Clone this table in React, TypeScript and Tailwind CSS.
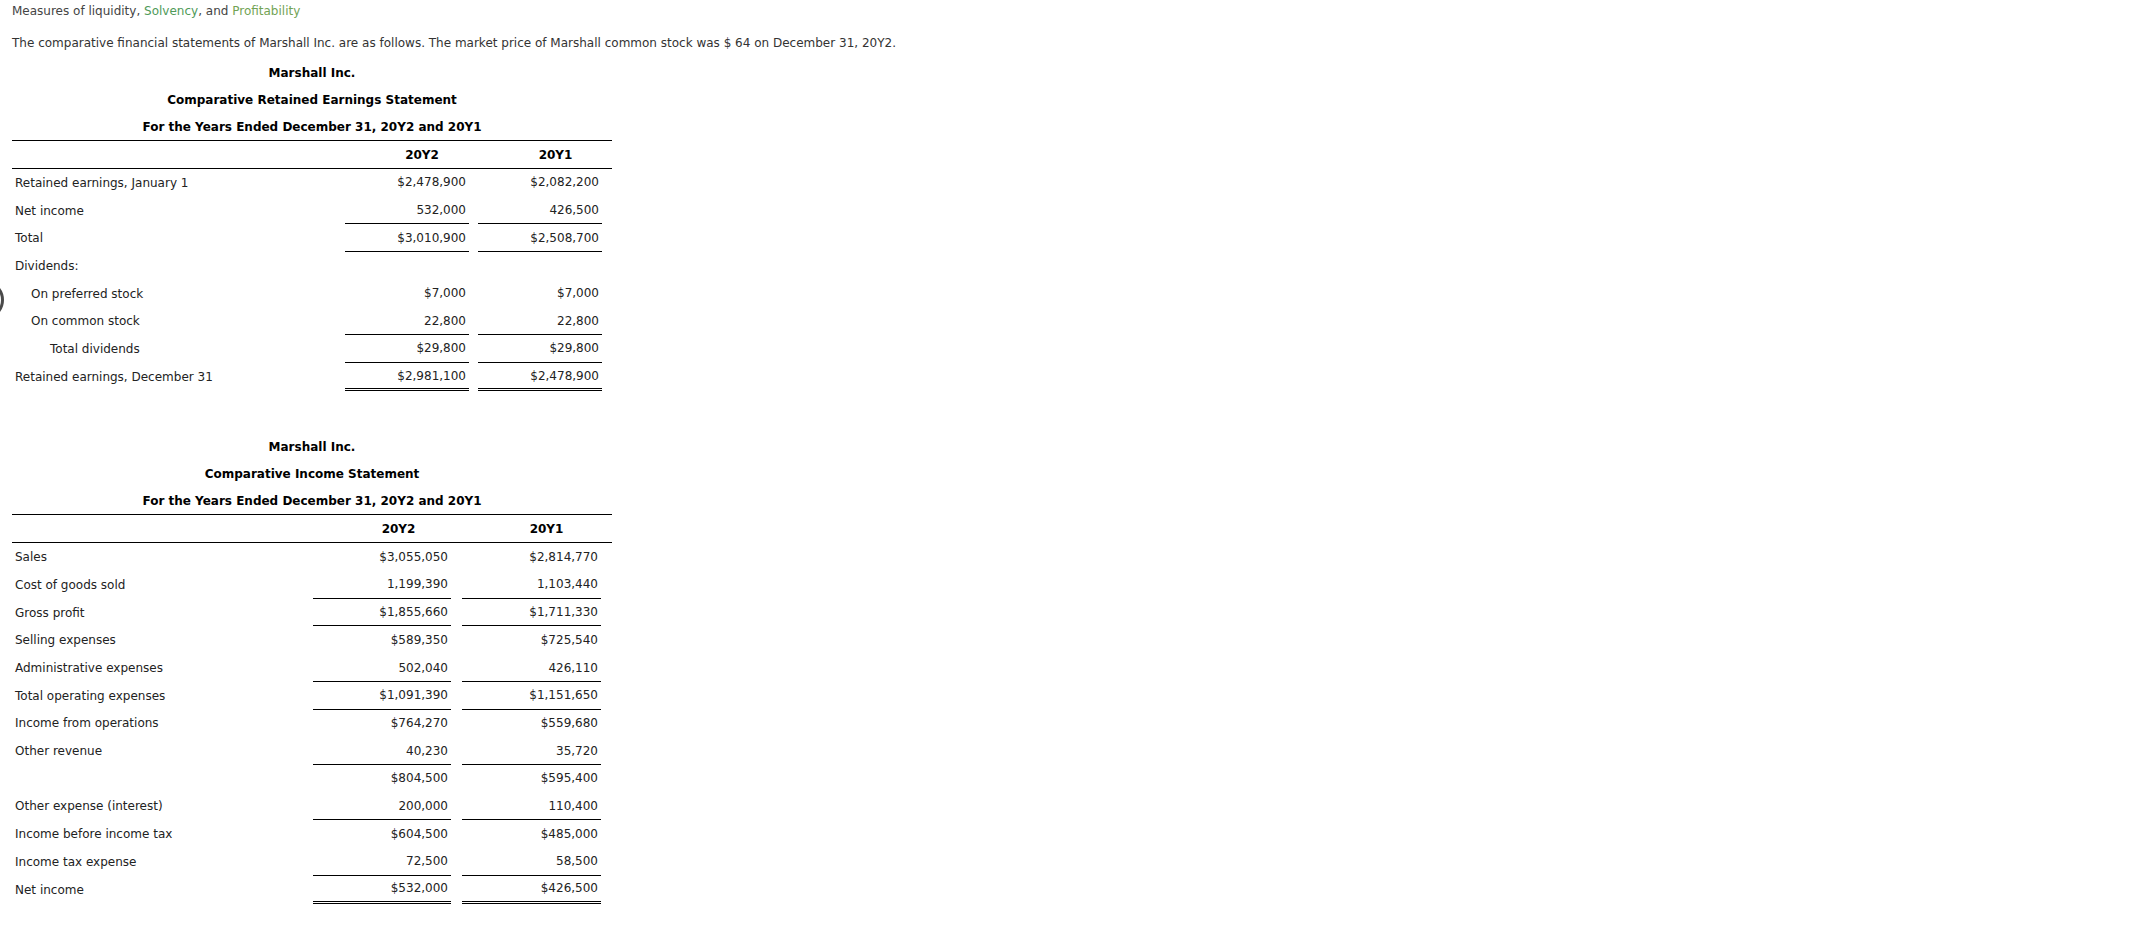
type Row = {
  label: string;
  a: string;
  b: string;
  indent?: 0 | 1 | 2;
  line?: "single" | "double";
};

const retained: Row[] = [
  { label: "Retained earnings, January 1", a: "$2,478,900", b: "$2,082,200" },
  { label: "Net income", a: "532,000", b: "426,500", line: "single" },
  { label: "Total", a: "$3,010,900", b: "$2,508,700", line: "single" },
  { label: "Dividends:", a: "", b: "" },
  { label: "On preferred stock", a: "$7,000", b: "$7,000", indent: 1 },
  { label: "On common stock", a: "22,800", b: "22,800", indent: 1, line: "single" },
  { label: "Total dividends", a: "$29,800", b: "$29,800", indent: 2, line: "single" },
  { label: "Retained earnings, December 31", a: "$2,981,100", b: "$2,478,900", line: "double" },
];

const income: Row[] = [
  { label: "Sales", a: "$3,055,050", b: "$2,814,770" },
  { label: "Cost of goods sold", a: "1,199,390", b: "1,103,440", line: "single" },
  { label: "Gross profit", a: "$1,855,660", b: "$1,711,330", line: "single" },
  { label: "Selling expenses", a: "$589,350", b: "$725,540" },
  { label: "Administrative expenses", a: "502,040", b: "426,110", line: "single" },
  { label: "Total operating expenses", a: "$1,091,390", b: "$1,151,650", line: "single" },
  { label: "Income from operations", a: "$764,270", b: "$559,680" },
  { label: "Other revenue", a: "40,230", b: "35,720", line: "single" },
  { label: "", a: "$804,500", b: "$595,400" },
  { label: "Other expense (interest)", a: "200,000", b: "110,400", line: "single" },
  { label: "Income before income tax", a: "$604,500", b: "$485,000" },
  { label: "Income tax expense", a: "72,500", b: "58,500", line: "single" },
  { label: "Net income", a: "$532,000", b: "$426,500", line: "double" },
];

type Layout = {
  labelW: string;
  colA: string;
  colB: string;
  gap: string;
  headA: string;
  headB: string;
};

const Statement = ({
  title,
  rows,
  layout,
}: {
  title: string;
  rows: Row[];
  layout: Layout;
}) => {
  return (
    <div className="w-[600px]">
      <div className="flex flex-col items-center font-bold text-black">
        <div className="flex h-[27px] items-center">Marshall Inc.</div>
        <div className="flex h-[27px] items-center">{title}</div>
        <div className="flex h-[27px] items-center">For the Years Ended December 31, 20Y2 and 20Y1</div>
      </div>

      <div className="flex h-[29px] items-center border-y border-black font-bold text-black">
        <div className={layout.labelW} />
        <div className={`${layout.colA} ${layout.headA} text-center`}>20Y2</div>
        <div className={layout.gap} />
        <div className={`${layout.colB} ${layout.headB} text-center`}>20Y1</div>
      </div>

      {rows.map((r, i) => {
        const border =
          r.line === "double"
            ? "border-b-[3px] border-double border-black"
            : r.line === "single"
              ? "border-b border-black"
              : "border-b border-transparent";
        const h = r.line === "double" ? "h-[28.6px]" : "h-[27.7px]";
        const pad = r.indent === 2 ? "pl-[38px]" : r.indent === 1 ? "pl-[19px]" : "pl-[3px]";
        return (
          <div key={i} className={`flex ${h} items-stretch`}>
            <div className={`${layout.labelW} ${pad} flex items-center`}>{r.label}</div>
            <div className={`${layout.colA} ${border} flex items-center justify-end pr-[3px]`}>{r.a}</div>
            <div className={layout.gap} />
            <div className={`${layout.colB} ${border} flex items-center justify-end pr-[3px]`}>{r.b}</div>
          </div>
        );
      })}
    </div>
  );
};

export default function App() {
  return (
    <div
      className="relative min-h-screen w-full bg-white text-[12px] leading-4 text-[#222]"
      style={{ fontFamily: '"DejaVu Sans", Verdana, sans-serif' }}
    >
      <svg className="absolute left-0 top-[285px]" width="6" height="30" viewBox="0 0 6 30">
        <circle cx="-16" cy="15" r="18.5" fill="none" stroke="#4a4a4a" strokeWidth="3" />
      </svg>

      <div className="pl-3 pt-[3px]">
        <p className="text-[#444]">
          Measures of liquidity, <span className="text-[#4f9a59]">Solvency</span>, and{" "}
          <span className="text-[#72a354]">Profitability</span>
        </p>
        <p className="mt-4 text-[#333]">
          The comparative financial statements of Marshall Inc. are as follows. The market price of Marshall common
          stock was $ 64 on December 31, 20Y2.
        </p>

        <div className="mt-2">
          <Statement
            title="Comparative Retained Earnings Statement"
            rows={retained}
            layout={{
              labelW: "w-[333px]",
              colA: "w-[124px]",
              colB: "w-[124px]",
              gap: "w-[9px]",
              headA: "pl-[30px]",
              headB: "pl-[31px]",
            }}
          />
        </div>

        <div className="mt-[42px]">
          <Statement
            title="Comparative Income Statement"
            rows={income}
            layout={{
              labelW: "w-[301px]",
              colA: "w-[138px]",
              colB: "w-[139px]",
              gap: "w-[11px]",
              headA: "pl-[33px]",
              headB: "pl-[30px]",
            }}
          />
        </div>
      </div>
    </div>
  );
}
